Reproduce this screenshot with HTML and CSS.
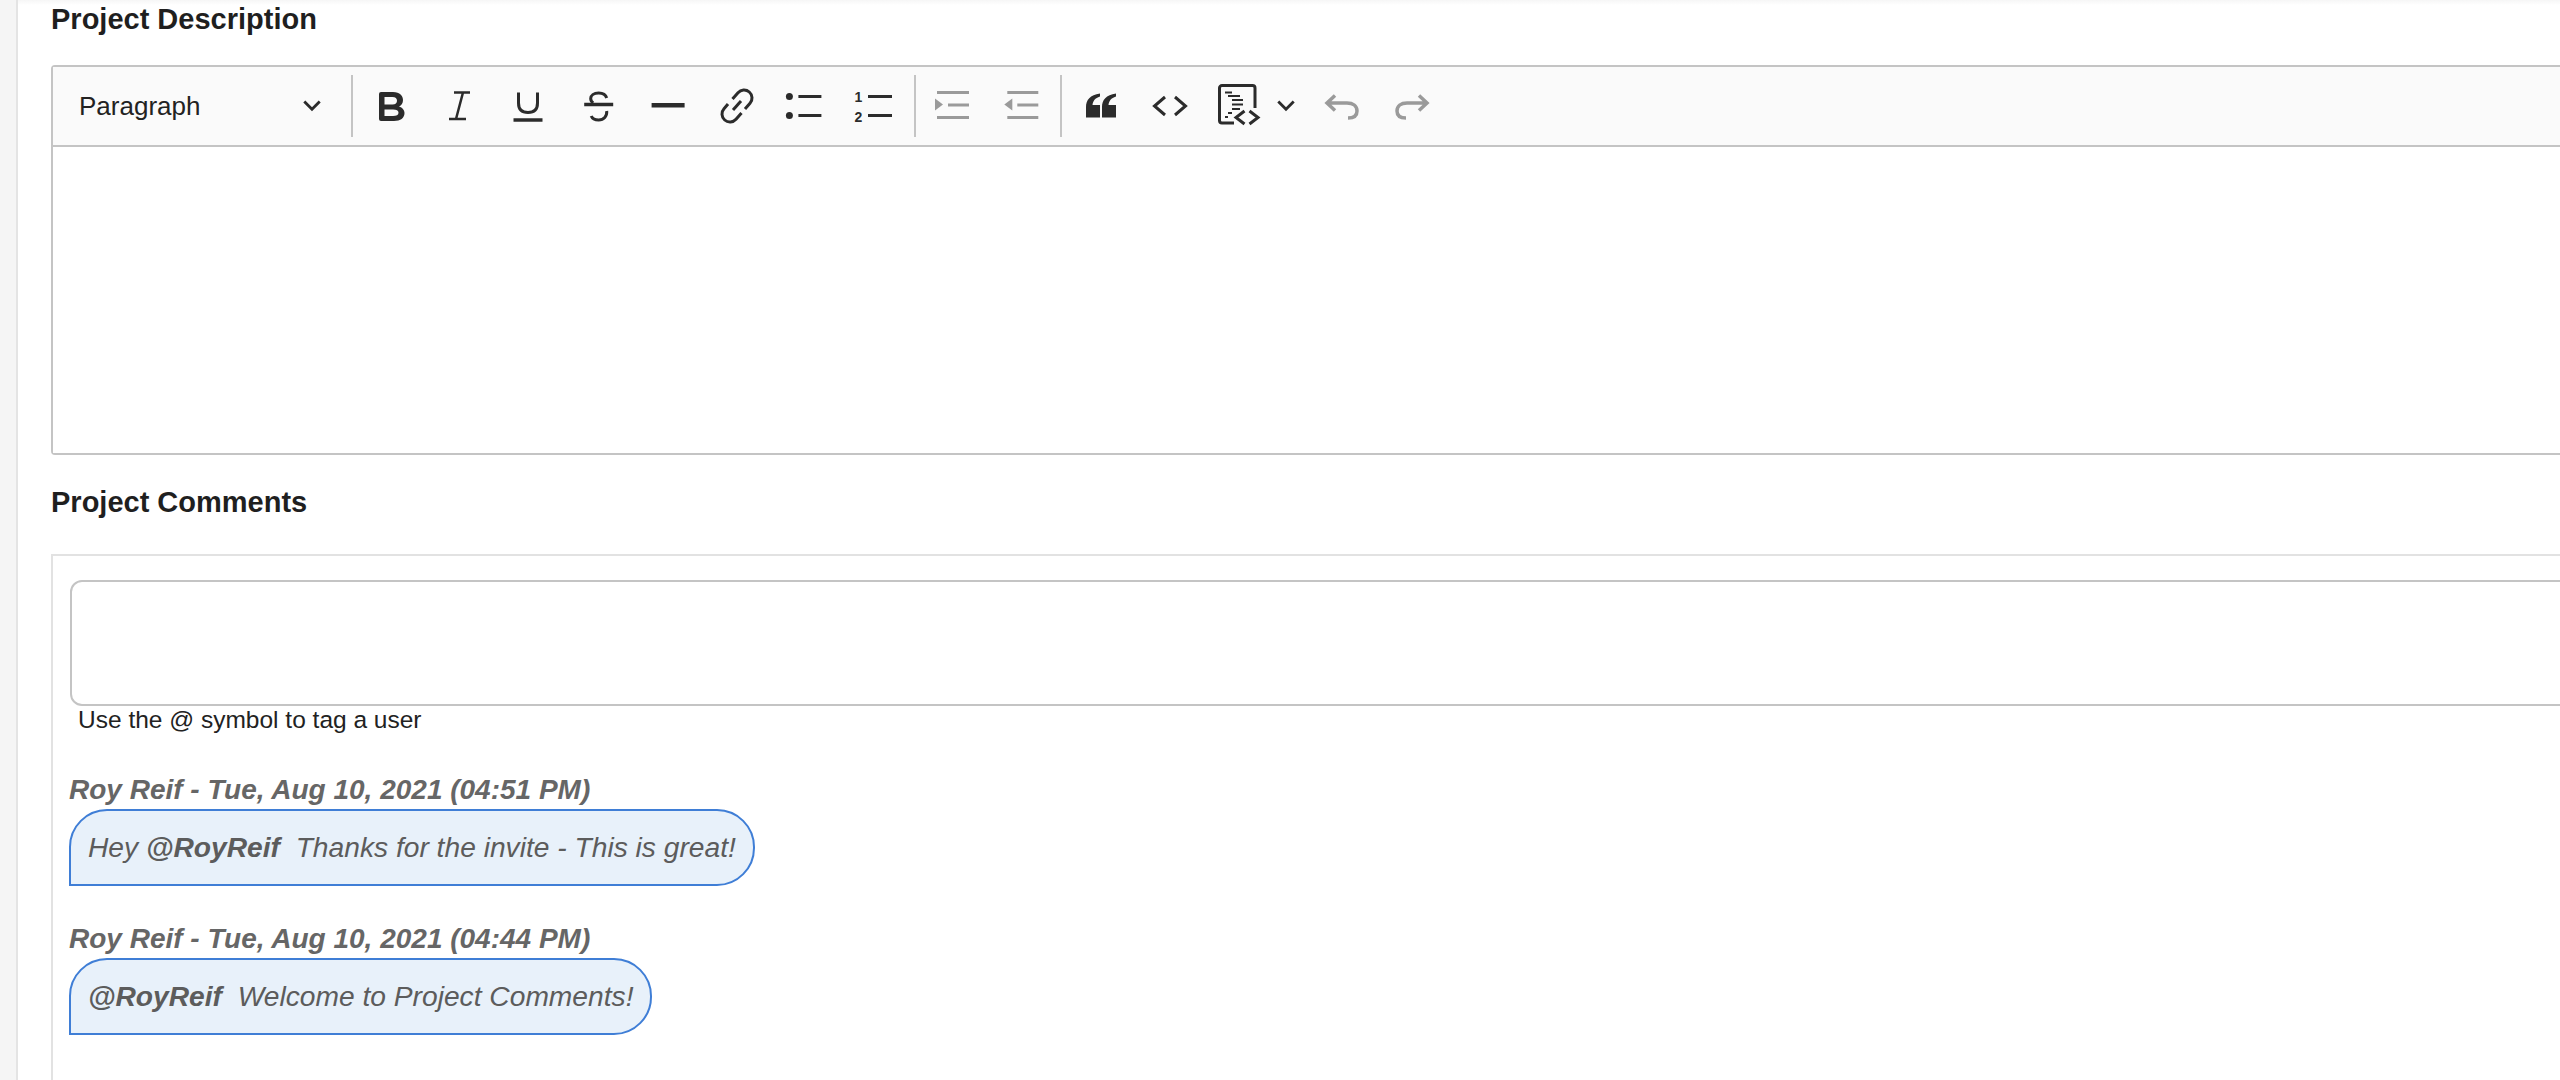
FILE: index.html
```html
<!DOCTYPE html>
<html lang="en">
<head>
<meta charset="utf-8">
<title>Project</title>
<link rel="stylesheet" href="styles.css">
</head>
<body>
<div class="shell">
  <aside class="rail"></aside>
  <main class="content">
    <h2 class="section-title first">Project Description</h2>
    <section class="editor">
      <div class="toolbar">
        <div class="format">
          <span>Paragraph</span>
          <svg class="chev" viewBox="0 0 20 20"><path d="M3 6 10 13 17 6"/></svg>
        </div>
        <i class="sep s1"></i>
        <button class="tb"><svg viewBox="0 0 40 40"><path class="fill" fill-rule="evenodd" d="M10 6H22C29 6 32 10 32 14 32 17 30.500 19.500 28 20.500 31.500 21.500 33.500 24.500 33.500 27 33.500 32 29.500 35 23 35H10A2 2 0 0 1 8 33V8A2 2 0 0 1 10 6ZM13.500 11V18.500H21.500C24.500 18.500 26 17 26 14.700S24.500 11 21.500 11ZM13.500 23.500V30H22C25.500 30 27.500 29 27.500 26.700S25.500 23.500 22 23.500Z"/></svg></button>
        <button class="tb"><svg viewBox="0 0 40 40"><path class="line thin" d="M14 6.500H30M23 6.500 16 33M9 33H26"/></svg></button>
        <button class="tb"><svg viewBox="0 0 40 40"><path class="line" d="M10.500 6.500V17C10.500 23.500 14 26.500 20 26.500S29.500 23.500 29.500 17V6.500"/><path class="line thick" d="M5.500 34H34.500"/></svg></button>
        <button class="tb"><svg viewBox="-1.700 0 40 40"><path class="line" d="M28 12C27 8.500 24 7 20 7 15 7 12 9.500 12 12.500 12 14.500 13 16 14.500 17"/><path class="line" d="M28 25C28.500 30.500 25 34 20 34 16 34 13.500 32.500 12.500 30"/><path class="line thick" d="M5.500 18.500H34.500"/></svg></button>
        <button class="tb"><svg viewBox="-1.600 0 40 40"><path class="line heavy" d="M4 19.200H37"/></svg></button>
        <button class="tb"><svg viewBox="-3 0 40 40"><path class="line" d="M15.500 13 21 6.700A8 8 0 0 1 33 17.300L28 23"/><path class="line" d="M24.500 27 19 33.300A8 8 0 0 1 7 22.700L11 18"/><path class="line" d="M16 24 24 15"/></svg></button>
        <button class="tb"><svg viewBox="-2.400 0 40 40"><circle class="fill" cx="4" cy="10.500" r="3.500"/><circle class="fill" cx="4" cy="29.500" r="3.500"/><path class="line" d="M13 10.500H36M13 29.500H36"/></svg></button>
        <button class="tb"><svg viewBox="0 0 40 40"><text class="num" x="7.500" y="15.500">1</text><text class="num" x="7.500" y="35.500">2</text><path class="line" d="M17 10.500H41M17 29.500H41"/></svg></button>
        <i class="sep s2"></i>
        <button class="tb off"><svg viewBox="0 0 40 40"><path class="line" d="M5 6.500H37M16 19H37M5 31.500H37"/><path class="fill" d="M3 12.500 11 18.500 3 24.500z"/></svg></button>
        <button class="tb off"><svg viewBox="-1.300 0 40 40"><path class="line" d="M5 6.500H36M15 19H36M5 31.500H36"/><path class="fill" d="M10 12.500 2 18.500 10 24.500z"/></svg></button>
        <i class="sep s3"></i>
        <button class="tb"><svg viewBox="0 0 40 40"><path class="fill" d="M5 31.500V21C5 14 9 9 19 7.500V10.500C14 12 12 15 11.500 19H19V31.500ZM21 31.500V21C21 14 25 9 35 7.500V10.500C30 12 28 15 27.500 19H35V31.500Z"/></svg></button>
        <button class="tb"><svg viewBox="0 0 40 40"><path class="line" d="M15 11 4.500 20 15 29M25 11 35.500 20 25 29"/></svg></button>
        <button class="tb source"><svg viewBox="0 0 46 46"><path class="line" d="M19 40H7A2.500 2.500 0 0 1 4.500 37.500V5A2.500 2.500 0 0 1 7 2.500H37.500A2.500 2.500 0 0 1 40 5V25"/><path class="line dash" d="M10 9.500H17M13 13H25M17 17H28M17 21.500H28M17 26H25M13 30H17M10 34H13"/><path class="line" d="M29.500 28 21 34.500 29.500 41M34.500 28 43 34.500 34.500 41"/></svg></button>
        <svg class="chev small" viewBox="0 0 20 20"><path d="M3 6 10 13 17 6"/></svg>
        <button class="tb off"><svg viewBox="0 0 40 40"><path class="line thick" d="M13 9.500 5 17 13 24.500M5 17H25C31 17 35 20 35 25S31 32 26 32"/></svg></button>
        <button class="tb off"><svg viewBox="0 0 40 40"><path class="line thick" d="M28 9.500 36 17 28 24.500M36 17H16C10 17 6 20 6 25S10 32 15 32"/></svg></button>
      </div>
      <div class="editable"></div>
    </section>

    <h2 class="section-title second">Project Comments</h2>
    <section class="comments">
      <div class="input"></div>
      <p class="hint">Use the @ symbol to tag a user</p>
      <article class="comment">
        <h3 class="meta">Roy Reif - Tue, Aug 10, 2021 (04:51 PM)</h3>
        <div class="bubble">Hey <b>@RoyReif</b>&nbsp; Thanks for the invite - This is great!</div>
      </article>
      <article class="comment">
        <h3 class="meta">Roy Reif - Tue, Aug 10, 2021 (04:44 PM)</h3>
        <div class="bubble"><b>@RoyReif</b>&nbsp; Welcome to Project Comments!</div>
      </article>
    </section>
  </main>
</div>
</body>
</html>
```
FILE: styles.css
```css
* { box-sizing: border-box; }
html, body { margin: 0; height: 100%; overflow: hidden; background: #fff; }
body { font-family: "Liberation Sans", Arial, sans-serif; color: #222; }
.shell { display: flex; height: 1080px; width: 2560px; }
.rail { width: 18px; flex: none; background: #f5f5f5; border-right: 2px solid #e4e4e4; }
.content { flex: 1; min-width: 0; padding: 0 0 0 33px; background: linear-gradient(#f6f6f6, #fff 5px); }

.section-title { margin: 0; font-size: 29px; line-height: 32px; font-weight: 700; color: #1f1f1f; }
.section-title.first { padding-top: 3px; margin-bottom: 30px; }
.section-title.second { margin: 31px 0 36px; }

.editor { width: 2600px; border: 2px solid #c4c4c4; border-radius: 4px 0 0 4px; }
.toolbar { height: 80px; display: flex; align-items: center; background: #fafafa; border-bottom: 2px solid #c4c4c4; }
.format { width: 298px; padding: 0 28px 0 26px; flex: none; display: flex; align-items: center; justify-content: space-between; font-size: 26px; color: #222; }
.chev { width: 22px; height: 22px; flex: none; fill: none; stroke: #2b2b2b; stroke-width: 2.600; }
.chev.small { margin: 0 11px 0 2px; }
.sep { width: 2px; height: 62px; flex: none; background: #c4c4c4; }
.s1 { margin-right: 4px; }
.s2 { margin: 0 2px 0 8px; }
.s3 { margin: 0 5px 0 5px; }
.tb { width: 68.600px; height: 60px; flex: none; padding: 0; display: flex; align-items: center; justify-content: center; background: none; border: 0; color: #2b2b2b; }
.tb svg { width: 40px; height: 40px; overflow: visible; }
.tb.source svg { width: 46px; height: 46px; }
.tb.off { color: #9a9a9a; }
.fill { fill: currentColor; }
.line { fill: none; stroke: currentColor; stroke-width: 3; }
.line.thin { stroke-width: 2.500; }
.line.thick { stroke-width: 3.500; }
.line.heavy { stroke-width: 4.500; }
.line.dash { stroke-width: 2; }
.num { fill: currentColor; font-size: 14px; font-weight: 700; text-anchor: middle; }

.editable { height: 306px; background: #fff; }

.comments { width: 2600px; height: 600px; border: 2px solid #e2e2e2; padding: 24px 16px; }
.input { height: 126px; margin-left: 1px; border: 2px solid #c4c4c4; border-radius: 12px; }
.hint { margin: 0 0 0 9px; font-size: 24.500px; line-height: 28px; color: #222; }
.comment { margin-top: 37px; }
.hint + .comment { margin-top: 40px; }
.meta { margin: 0; font-size: 28px; line-height: 32px; font-weight: 700; font-style: italic; color: #666; }
.bubble { display: table; margin-top: 3px; height: 77px; padding: 0 17px; line-height: 73px; font-size: 28.200px; font-style: italic; color: #5c5c5c; background: #e8f1fa; border: 2px solid #3f7ed6; border-radius: 38px 38px 38px 0; }
.bubble b { font-weight: 700; }
```
